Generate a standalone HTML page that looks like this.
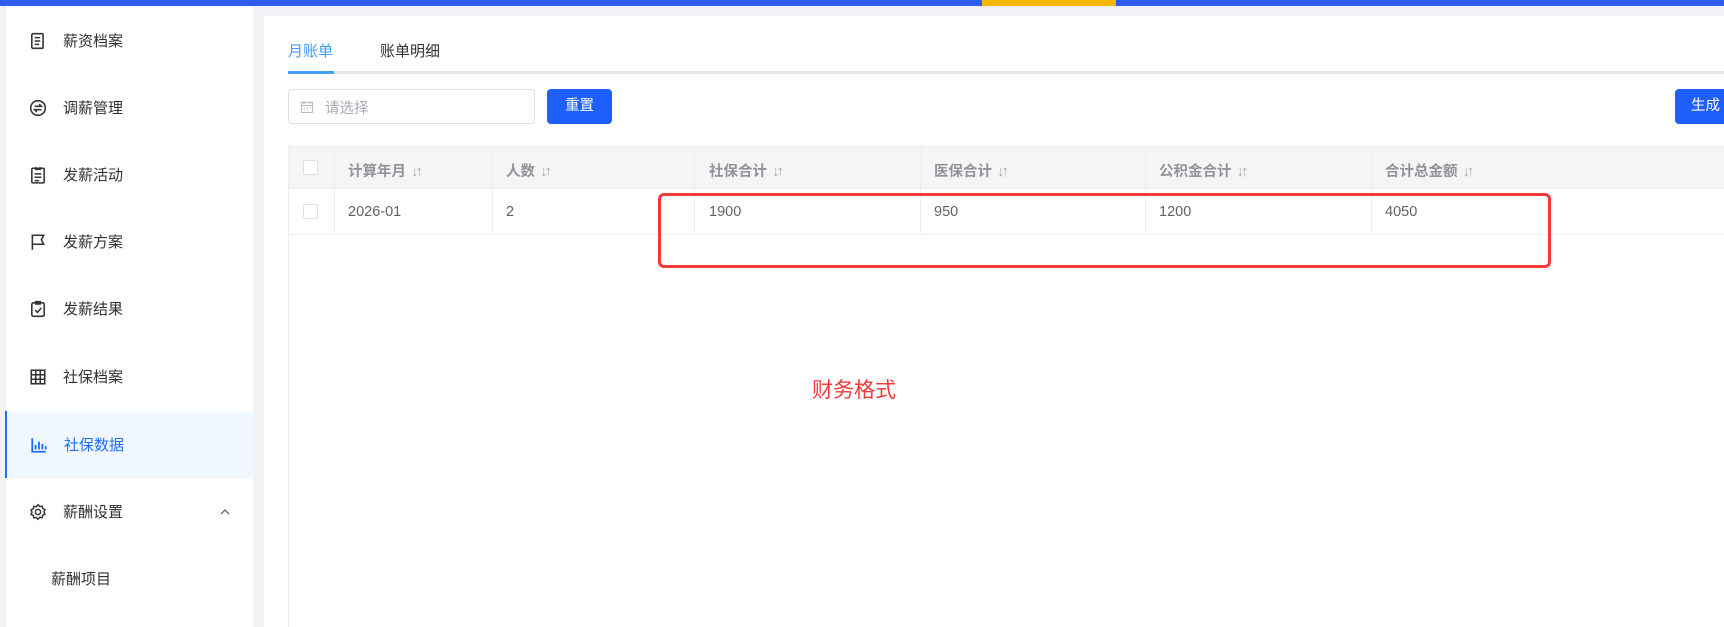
<!DOCTYPE html>
<html><head><meta charset="utf-8"><style>
*{margin:0;padding:0;box-sizing:border-box}
body{width:1724px;height:627px;overflow:hidden;background:#f0f2f5;font-family:"Liberation Sans","Noto Sans CJK SC",sans-serif;position:relative}
.abs{position:absolute}
.top{left:0;top:0;width:1724px;height:6px;background:#2f5bf5}
.side{left:5px;top:6px;width:248px;height:621px;background:#fff;border-left:1px solid #e8e8e8}
.item{position:absolute;left:0;width:248px;height:67px;font-size:15px;color:#303133;display:flex;align-items:center}
.item svg{position:absolute;left:23px}
.item span{position:absolute;left:57px}
.panel{left:264px;top:16px;width:1460px;height:611px;background:#fff}
.th,.td{position:absolute;font-size:14.5px}
.th{color:#909399;font-weight:bold;top:160px}
.td{color:#606266;top:204px}
.vl{position:absolute;width:1px;background:#ebeef5}
.cb{position:absolute;left:303px;width:15px;height:15px;border:1px solid #dcdfe6;border-radius:2px;background:#fff}
.s{font-weight:normal;color:#a8abb2;font-size:15px;margin-left:5px;letter-spacing:-3px}
</style></head><body>
<div class="abs top"></div>
<div class="abs" style="left:982px;top:0;width:134px;height:6px;background:#f5b800"></div>
<div class="abs side">
 <div class="item" style="top:1px"><svg width="18" height="18" viewBox="0 0 16 16" fill="none" stroke="#333" stroke-width="1.4"><rect x="2.5" y="1.5" width="10" height="13" rx="1"/><path d="M5 5h5M5 8h5M5 11h4"/></svg><span>薪资档案</span></div>
 <div class="item" style="top:68px"><svg width="18" height="18" viewBox="0 0 16 16" fill="none" stroke="#333" stroke-width="1.4"><circle cx="8" cy="8" r="6.5"/><path d="M5 6.5h6l-2-2M11 9.5H5l2 2"/></svg><span>调薪管理</span></div>
 <div class="item" style="top:135px"><svg width="18" height="18" viewBox="0 0 16 16" fill="none" stroke="#333" stroke-width="1.4"><rect x="2.5" y="2" width="11" height="13" rx="1"/><path d="M6 1v2h4V1M5 7h6M5 10h6M5 13h4"/></svg><span>发薪活动</span></div>
 <div class="item" style="top:202px"><svg width="18" height="18" viewBox="0 0 16 16" fill="none" stroke="#333" stroke-width="1.4"><path d="M3 15V2h10l-2 4 2 4H3"/></svg><span>发薪方案</span></div>
 <div class="item" style="top:269px"><svg width="18" height="18" viewBox="0 0 16 16" fill="none" stroke="#333" stroke-width="1.4"><rect x="2.5" y="2.5" width="11" height="12" rx="1.5"/><path d="M6 1.5h4v2H6zM5.5 9l2 2 3.5-4"/></svg><span>发薪结果</span></div>
 <div class="item" style="top:337px"><svg width="18" height="18" viewBox="0 0 16 16" fill="none" stroke="#333" stroke-width="1.4"><rect x="2" y="2" width="12" height="12"/><path d="M6 2v12M10 2v12M2 6h12M2 10h12"/></svg><span>社保档案</span></div>
 <div class="item" style="top:405px;background:#f0f7ff;color:#1e6fff;border-left:2px solid #1e6fff;left:-1px;width:249px"><svg width="18" height="18" viewBox="0 0 16 16" fill="none" stroke="#1e6fff" stroke-width="1.6"><path d="M2 2v12h12M5 12V8M8 12V5M11 12V7M14 12V9"/></svg><span>社保数据</span></div>
 <div class="item" style="top:472px"><svg width="18" height="18" viewBox="0 0 16 16" fill="none" stroke="#333" stroke-width="1.3"><circle cx="8" cy="8" r="2.3"/><path d="M8 1.5l1.5 1.6 2.2-.3.5 2.1 2 1-.9 2 .9 2-2 1-.5 2.1-2.2-.3L8 14.5l-1.5-1.6-2.2.3-.5-2.1-2-1 .9-2-.9-2 2-1 .5-2.1 2.2.3z"/></svg><span>薪酬设置</span><svg style="left:213px" width="12" height="12" viewBox="0 0 12 12" fill="none" stroke="#555" stroke-width="1.2"><path d="M2 8l4-4 4 4"/></svg></div>
 <div class="item" style="top:539px"><span style="left:45px">薪酬项目</span></div>
</div>
<div class="abs panel"></div>
<div class="abs" style="left:288px;top:40px;font-size:15px;color:#409eff">月账单</div>
<div class="abs" style="left:380px;top:40px;font-size:15px;color:#303133">账单明细</div>
<div class="abs" style="left:288px;top:71px;width:1436px;height:3px;background:#e4e7ed"></div>
<div class="abs" style="left:288px;top:71px;width:46px;height:3px;background:#409eff"></div>
<div class="abs" style="left:288px;top:89px;width:247px;height:35px;border:1px solid #dcdfe6;border-radius:4px"></div>
<svg class="abs" style="left:300px;top:100px" width="14" height="14" viewBox="0 0 14 14" fill="none" stroke="#b8bcc4" stroke-width="1.1"><rect x="1.5" y="2.5" width="11" height="10"/><path d="M1.5 5.5h11M4 1v3M10 1v3M4 8h1M7 8h1M10 8h1M4 10h1M7 10h1"/></svg>
<div class="abs" style="left:325px;top:97px;font-size:14.5px;color:#a8abb2">请选择</div>
<div class="abs" style="left:547px;top:89px;width:65px;height:35px;background:#1e5efc;border-radius:4px;color:#fff;font-size:14.5px;text-align:center;line-height:35px">重置</div>
<div class="abs" style="left:1675px;top:89px;width:60px;height:35px;background:#1e5efc;border-radius:4px;color:#fff;font-size:14.5px;line-height:35px;padding-left:16px">生成</div>
<div class="abs" style="left:288px;top:146px;width:1436px;height:43px;background:#f5f5f6;border-top:1px solid #ebeef5;border-bottom:1px solid #ebeef5"></div>
<div class="abs" style="left:288px;top:234px;width:1436px;height:1px;background:#ebeef5"></div>
<div class="vl" style="left:288px;top:146px;height:481px"></div>
<div class="vl" style="left:334px;top:146px;height:88px"></div>
<div class="vl" style="left:492px;top:146px;height:88px"></div>
<div class="vl" style="left:694px;top:146px;height:88px"></div>
<div class="vl" style="left:920px;top:146px;height:88px"></div>
<div class="vl" style="left:1145px;top:146px;height:88px"></div>
<div class="vl" style="left:1371px;top:146px;height:88px"></div>
<div class="cb" style="top:160px"></div><div class="cb" style="top:204px"></div>
<div class="th" style="left:348px">计算年月<span class="s">↓↑</span></div>
<div class="th" style="left:506px">人数<span class="s">↓↑</span></div>
<div class="th" style="left:709px">社保合计<span class="s">↓↑</span></div>
<div class="th" style="left:934px">医保合计<span class="s">↓↑</span></div>
<div class="th" style="left:1159px">公积金合计<span class="s">↓↑</span></div>
<div class="th" style="left:1385px">合计总金额<span class="s">↓↑</span></div>
<div class="td" style="left:348px">2026-01</div>
<div class="td" style="left:506px">2</div>
<div class="td" style="left:709px">1900</div>
<div class="td" style="left:934px">950</div>
<div class="td" style="left:1159px">1200</div>
<div class="td" style="left:1385px">4050</div>
<div class="abs" style="left:658px;top:193px;width:893px;height:75px;border:3.5px solid #f5383a;border-radius:6px"></div>
<div class="abs" style="left:812px;top:374px;font-size:21px;color:#f5383a">财务格式</div>
</body></html>
